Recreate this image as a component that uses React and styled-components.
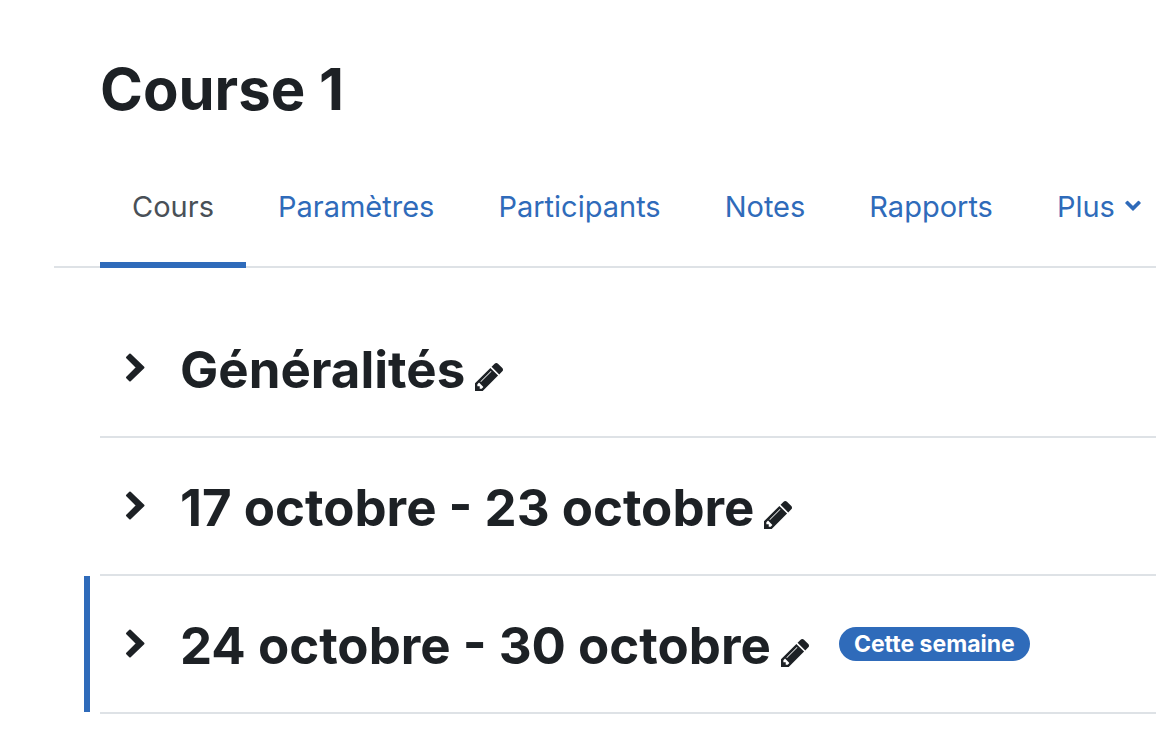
import React from "react";
import styled, { createGlobalStyle } from "styled-components";

const GlobalStyle = createGlobalStyle`
    * {
        box-sizing: border-box;
    }

    body {
        margin: 0;
        background: #fff;
        color: #1d2125;
        font-family: Inter, "Liberation Sans", sans-serif;
        overflow-x: hidden;
    }
`;

const Page = styled.main`
    padding: 55px 0 0 54px;
`;

const CourseTitle = styled.h1`
    margin: 0;
    padding-left: 46px;
    font-size: 58px;
    line-height: 68px;
    font-weight: 700;
`;

const Tabs = styled.nav`
    display: flex;
    margin-top: 23px;
    padding-left: 46px;
    border-bottom: 2px solid #dee2e6;
`;

const Tab = styled.a`
    display: flex;
    align-items: center;
    gap: 10px;
    height: 122px;
    margin-bottom: -2px;
    padding: 4px 32px 0;
    border-bottom: 6px solid ${props => (props.$active ? "#2f6bba" : "transparent")};
    color: ${props => (props.$active ? "#495057" : "#2f6bba")};
    font-size: 29px;
    text-decoration: none;
    white-space: nowrap;
`;

const Sections = styled.ul`
    margin: 32px 0 0;
    padding: 0 0 0 30px;
    list-style: none;
`;

const Section = styled.li`
    &::after {
        content: "";
        display: block;
        height: 2px;
        margin-left: 16px;
        background: #dee2e6;
    }
`;

const SectionHeader = styled.div`
    display: flex;
    align-items: center;
    height: 136px;
    padding-left: 10px;
    border-left: 6px solid ${props => (props.$current ? "#2f6bba" : "transparent")};
`;

const IconButton = styled.button`
    display: flex;
    padding: 0;
    border: 0;
    background: none;
    color: inherit;
    cursor: pointer;
`;

const Toggle = styled(IconButton)`
    justify-content: center;
    width: 70px;
`;

const Heading = styled.div`
    display: flex;
    align-items: flex-end;
    gap: 10px;
    padding-left: 10px;
`;

const SectionTitle = styled.h2`
    margin: 0;
    padding-top: 4px;
    font-size: 51px;
    line-height: 62px;
    font-weight: 700;
    white-space: nowrap;
`;

const EditButton = styled(IconButton)`
    padding-bottom: 10px;
`;

const Badge = styled.span`
    margin-left: 30px;
    padding: 0 15px;
    border-radius: 17px;
    background: #2f6bba;
    color: #fff;
    font-size: 23px;
    line-height: 34px;
    font-weight: 700;
    white-space: nowrap;
`;

const PencilIcon = () => (
    <svg width="28" height="28" viewBox="128 149 1515 1515" fill="currentColor">
        <path d="M491 1536l91-91-235-235-91 91v107h128v128h107zm523-928q0-22-22-22-10 0-17 7l-542 542q-7 7-7 17 0 22 22 22 10 0 17-7l542-542q7-7 7-17zm-54-192l416 416-832 832h-416v-416zm683 96q0 53-37 90l-166 166-416-416 166-165q36-38 90-38 53 0 91 38l235 234q37 39 37 91z" />
    </svg>
);

const ChevronRight = () => (
    <svg width="20" height="30" viewBox="0 0 20 30" fill="currentColor" stroke="currentColor">
        <path d="M2 4.500L5 1.500 18.500 14.500 5 27.500 2 24.500 12 14.500z" strokeWidth="2" strokeLinejoin="round" />
    </svg>
);

const ChevronDown = () => (
    <svg width="16" height="12" viewBox="0 0 16 12" fill="currentColor" stroke="currentColor">
        <path d="M1 3L2.500 1.500 8 7l5.500-5.500L15 3 8 10z" strokeWidth="1.600" strokeLinejoin="round" />
    </svg>
);

const tabs = ["Cours", "Paramètres", "Participants", "Notes", "Rapports", "Plus"];

const sections = [
    { title: "Généralités" },
    { title: "17 octobre - 23 octobre" },
    { title: "24 octobre - 30 octobre", current: true }
];

const App = () => (
    <>
        <GlobalStyle />
        <Page>
            <CourseTitle>Course 1</CourseTitle>
            <Tabs>
                {tabs.map((tab, index) => (
                    <Tab key={tab} href="#" $active={index === 0}>
                        {tab}
                        {tab === "Plus" && <ChevronDown />}
                    </Tab>
                ))}
            </Tabs>
            <Sections>
                {sections.map(section => (
                    <Section key={section.title}>
                        <SectionHeader $current={section.current}>
                            <Toggle aria-label="Ouvrir">
                                <ChevronRight />
                            </Toggle>
                            <Heading>
                                <SectionTitle>{section.title}</SectionTitle>
                                <EditButton aria-label="Modifier">
                                    <PencilIcon />
                                </EditButton>
                            </Heading>
                            {section.current && <Badge>Cette semaine</Badge>}
                        </SectionHeader>
                    </Section>
                ))}
            </Sections>
        </Page>
    </>
);

export default App;
